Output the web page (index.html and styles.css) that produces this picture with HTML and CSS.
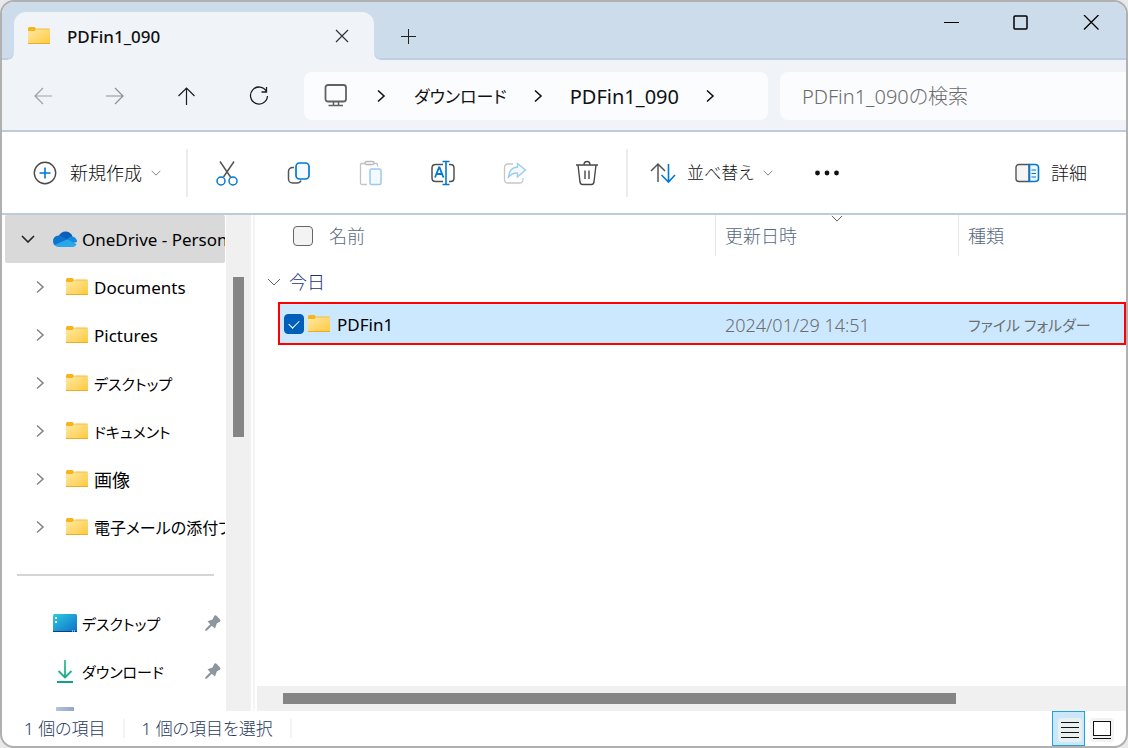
FILE: index.html
```html
<!DOCTYPE html>
<html lang="ja">
<head>
<meta charset="utf-8">
<meta name="viewport" content="width=device-width, initial-scale=1">
<title>PDFin1_090</title>
<link rel="stylesheet" href="styles.css">
</head>
<body>
<svg class="sprite" aria-hidden="true">
  <defs>
    <linearGradient id="folder-fill" x1="0" y1="0" x2="1" y2="1">
      <stop offset="0" stop-color="#ffe9a6"/><stop offset="1" stop-color="#ffc93c"/>
    </linearGradient>
    <linearGradient id="desk-fill" x1="0" y1="0" x2="1" y2="1">
      <stop offset="0" stop-color="#2ccbe0"/><stop offset="1" stop-color="#0f6fc8"/>
    </linearGradient>
    <linearGradient id="down-fill" gradientUnits="userSpaceOnUse" x1="0" y1="0" x2="0" y2="24">
      <stop offset="0" stop-color="#3cc68a"/><stop offset="1" stop-color="#0fa08c"/>
    </linearGradient>
    <linearGradient id="doc-fill" x1="0" y1="0" x2="1" y2="0">
      <stop offset="0" stop-color="#b4c4da"/><stop offset="1" stop-color="#8fa6c6"/>
    </linearGradient>
  </defs>
  <symbol id="folder" viewBox="0 0 24 20">
    <path d="M1 2.500Q1 1 2.500 1H7.500L9 2.500V6H1z" fill="#f7b51c"/>
    <path d="M1 5H7.500L9.500 3H22Q23 3 23 4V18H1z" fill="url(#folder-fill)"/>
    <path d="M9.500 3H22.500" stroke="#f2bd3a"/>
    <path d="M1 17.500H23" stroke="#efab21"/>
  </symbol>
  <symbol id="chev-right" viewBox="0 0 10 14"><path d="M2 1.500L8 7L2 12.500" fill="none" stroke="currentColor" stroke-width="1.600"/></symbol>
  <symbol id="chev-down" viewBox="0 0 14 8"><path d="M1 1L7 7L13 1" fill="none" stroke="currentColor"/></symbol>
  <symbol id="pin" viewBox="0 0 18 18"><path d="M10.500 1.500Q11.500 .8 12.500 1.700L16 5.500Q17 6.700 16 7.500L12.800 9.500L11 14.500L7.800 11.800L3 16.500L1 17L1.500 15L6.200 10.200L3.500 7.300L8.500 5.500z" fill="#8b979d"/></symbol>
</svg>

<div class="window">
  <header class="titlebar">
    <div class="tab">
      <svg class="folder" aria-hidden="true"><use href="#folder"/></svg>
      <span class="tab-title">PDFin1_090</span>
      <button class="tab-close" aria-label="タブを閉じる"><svg width="14" height="14" viewBox="0 0 14 14"><path d="M1 1L13 13M13 1L1 13" fill="none" stroke="#333" stroke-width="1.200"/></svg></button>
    </div>
    <button class="tab-new" aria-label="新しいタブ"><svg width="16" height="16" viewBox="0 0 16 16"><path d="M8.500 1V16M1 8.500H16" stroke="#222"/></svg></button>
    <div class="window-controls">
      <button aria-label="最小化"><svg width="16" height="16" viewBox="0 0 16 16"><path d="M1 7.500H16" stroke="#000"/></svg></button>
      <button aria-label="最大化"><svg width="16" height="16" viewBox="0 0 16 16"><rect x="1" y="1" width="13" height="13" rx="1" fill="none" stroke="#000" stroke-width="1.500"/></svg></button>
      <button aria-label="閉じる"><svg width="16" height="16" viewBox="0 0 16 16"><path d="M1 0L15.500 14.500M15.500 0L1 14.500" stroke="#000" stroke-width="1.300"/></svg></button>
    </div>
  </header>

  <nav class="navbar">
    <div class="nav-buttons">
      <button disabled aria-label="戻る"><svg width="20" height="20" viewBox="0 0 20 20"><path d="M19 10H2M10 2L2 10L10 18" fill="none" stroke="#9da0a3" stroke-width="1.200"/></svg></button>
      <button disabled aria-label="進む"><svg width="20" height="20" viewBox="0 0 20 20"><path d="M1 10H18M10 2L18 10L10 18" fill="none" stroke="#8e9194" stroke-width="1.200"/></svg></button>
      <button aria-label="上へ"><svg width="20" height="20" viewBox="0 0 20 20"><path d="M9.500 19V2M1.500 10L9.500 2L17.500 10" fill="none" stroke="#1c1c1c" stroke-width="1.200"/></svg></button>
      <button aria-label="最新の情報に更新"><svg width="20" height="20" viewBox="0 0 20 20"><path d="M17.500 5.500A8.500 8.500 0 1 0 18.500 10M17.500 1V6H12.500" fill="none" stroke="#1c1c1c" stroke-width="1.300"/></svg></button>
    </div>
    <div class="address">
      <svg class="pc" width="24" height="24" viewBox="0 0 24 24" aria-hidden="true"><rect x="1.500" y="1" width="20.500" height="16.500" rx="2.500" fill="none" stroke="#616161" stroke-width="1.800"/><path d="M9.500 18V21M14.500 18V21M4.500 21.500H19" stroke="#616161" stroke-width="1.500"/></svg>
      <svg class="crumb-sep first" aria-hidden="true"><use href="#chev-right"/></svg>
      <a href="#" class="crumb narrow">ダウンロード</a>
      <svg class="crumb-sep" aria-hidden="true"><use href="#chev-right"/></svg>
      <a href="#" class="crumb">PDFin1_090</a>
      <svg class="crumb-sep last" aria-hidden="true"><use href="#chev-right"/></svg>
    </div>
    <input class="search" type="search" placeholder="PDFin1_090の検索" aria-label="PDFin1_090の検索">
  </nav>

  <div class="toolbar" role="toolbar">
    <button class="tool labelled new">
      <svg width="24" height="24" viewBox="0 0 24 24" aria-hidden="true"><circle cx="12" cy="12" r="10.700" fill="none" stroke="#4a4a4a" stroke-width="1.400"/><path d="M12 6.500V17.500M6.500 12H17.500" stroke="#0078d4" stroke-width="1.600"/></svg>
      <span>新規作成</span>
      <svg class="caret" aria-hidden="true"><use href="#chev-down"/></svg>
    </button>
    <span class="divider"></span>
    <div class="tool-group">
      <button class="tool" aria-label="切り取り"><svg width="26" height="26" viewBox="0 0 26 26"><path d="M6 1.500L16.500 17M20 1.500L9.500 17" stroke="#555" stroke-width="1.500"/><g fill="#fff" stroke="#0078d4" stroke-width="1.500"><circle cx="7" cy="21" r="4"/><circle cx="19" cy="21" r="4"/></g></svg></button>
      <button class="tool" aria-label="コピー"><svg width="26" height="26" viewBox="0 0 26 26"><path d="M8 7.500H7A4 4 0 0 0 2.500 11.500V19A4 4 0 0 0 6.500 23H11Q14 23 15 20.500" fill="none" stroke="#555" stroke-width="1.500"/><rect x="10" y="3" width="13" height="16" rx="3.500" fill="#f4faff" stroke="#0078d4" stroke-width="1.700"/></svg></button>
      <button class="tool" disabled aria-label="貼り付け"><svg width="26" height="26" viewBox="0 0 26 26"><path d="M7 3.500H3.500Q2.500 3.500 2.500 4.500V23Q2.500 24.500 4 24.500H9M16 3.500H18.500Q19.500 3.500 19.500 4.500V6.500" fill="none" stroke="#c3c3c3" stroke-width="1.300"/><rect x="7" y="1.500" width="9" height="3" rx="1.500" fill="#fff" stroke="#b8b8b8" stroke-width="1.300"/><rect x="12" y="9" width="11" height="15.500" rx="1.500" fill="#f2f9ff" stroke="#9cc9ee" stroke-width="1.500"/></svg></button>
      <button class="tool" aria-label="名前の変更"><svg width="26" height="26" viewBox="0 0 26 26"><path d="M13 4.500H5.500Q2 4.500 2 8V18Q2 21.500 5.500 21.500H13M19 4.500H20.500Q24 4.500 24 8V18Q24 21.500 20.500 21.500H19" fill="none" stroke="#505050" stroke-width="1.500"/><path d="M5 17.500L9 7.500H9.500L13.500 17.500M6.500 14H12" fill="none" stroke="#0078d4" stroke-width="1.800"/><path d="M12.500 1.500H19.500M16 1.500V24.500M12.500 24.500H19.500" stroke="#0078d4" stroke-width="1.600"/></svg></button>
      <button class="tool" disabled aria-label="共有"><svg width="26" height="26" viewBox="0 0 26 26"><path d="M11 4H6Q2.500 4 2.500 7.500V19.500Q2.500 23 6 23H17.500Q21 23 21 19.500V18" fill="none" stroke="#c6c6c6" stroke-width="1.300"/><path d="M15.500 3.500L23.500 10L15.500 17V13Q10.500 12.500 6.500 17Q7.500 7.500 15.500 7z" fill="#f4faff" stroke="#9fcced" stroke-width="1.400"/></svg></button>
      <button class="tool" aria-label="削除"><svg width="26" height="26" viewBox="0 0 26 26"><path d="M2 5H24M10 5Q10 1.500 13 1.500T16 5M4 5L6 22Q6.500 24.500 8.500 24.500H17.500Q19.500 24.500 20 22L22 5M11 10.500V19M15 10.500V19" fill="none" stroke="#484848" stroke-width="1.400"/></svg></button>
    </div>
    <span class="divider"></span>
    <button class="tool labelled sort">
      <svg width="26" height="22" viewBox="0 0 26 22" aria-hidden="true"><path d="M8 20V2.500M1 9L8 2L15 9" fill="none" stroke="#555" stroke-width="1.500"/><path d="M18.500 2V19.500M11.500 13L18.500 20L25 13" fill="none" stroke="#0078d4" stroke-width="1.600"/></svg>
      <span>並べ替え</span>
      <svg class="caret" aria-hidden="true"><use href="#chev-down"/></svg>
    </button>
    <button class="tool more" aria-label="もっと見る"><svg width="26" height="6" viewBox="0 0 26 6"><g fill="#111"><circle cx="3.500" cy="3" r="2.400"/><circle cx="13" cy="3" r="2.400"/><circle cx="22.500" cy="3" r="2.400"/></g></svg></button>
    <button class="tool labelled details">
      <svg width="26" height="20" viewBox="0 0 26 20" aria-hidden="true"><path d="M15 1.500H5Q2 1.500 2 4.500V15.500Q2 18.500 5 18.500H15z" fill="#f5f5f5" stroke="#555" stroke-width="1.400"/><path d="M15.500 1.500H21Q24.500 1.500 24.500 4.500V15.500Q24.500 18.500 21 18.500H15.500z" fill="#eef7ff" stroke="#0078d4" stroke-width="1.600"/><path d="M17.500 7H22M17.500 10.500H22M17.500 14H22" stroke="#0078d4" stroke-width="1.200"/></svg>
      <span>詳細</span>
    </button>
  </div>

  <div class="content">
    <aside class="sidebar">
      <div class="tree">
        <a href="#" class="node root">
          <svg class="expander" viewBox="0 0 14 8" aria-hidden="true"><path d="M1 1L7 7L13 1" fill="none" stroke="#222" stroke-width="1.600"/></svg>
          <svg class="place" width="24" height="18" viewBox="0 0 24 18" aria-hidden="true"><path d="M5.500 6.500Q8 1.500 12.500 1.500Q17.500 1.500 19.500 6.500L13 11z" fill="#0a5fb8"/><path d="M0 11.500Q0 6 5.500 5.500Q8 5.500 10 7L17 11L2 15.500Q0 14 0 11.500z" fill="#1073ce"/><path d="M14 9.500Q16 6.500 19.500 6.500Q24 7.500 24 12L20 13z" fill="#1389df"/><path d="M1.500 15L14 9.500L23.500 14Q22.500 17 19.500 17H5.500Q3 17 1.500 15z" fill="#28a8ea"/></svg>
          <span>OneDrive - Personal</span>
        </a>
        <a href="#" class="node"><svg class="expander" aria-hidden="true"><use href="#chev-right"/></svg><svg class="folder" aria-hidden="true"><use href="#folder"/></svg><span>Documents</span></a>
        <a href="#" class="node"><svg class="expander" aria-hidden="true"><use href="#chev-right"/></svg><svg class="folder" aria-hidden="true"><use href="#folder"/></svg><span>Pictures</span></a>
        <a href="#" class="node narrow-kana"><svg class="expander" aria-hidden="true"><use href="#chev-right"/></svg><svg class="folder" aria-hidden="true"><use href="#folder"/></svg><span>デスクトップ</span></a>
        <a href="#" class="node narrow-kana"><svg class="expander" aria-hidden="true"><use href="#chev-right"/></svg><svg class="folder" aria-hidden="true"><use href="#folder"/></svg><span>ドキュメント</span></a>
        <a href="#" class="node kanji"><svg class="expander" aria-hidden="true"><use href="#chev-right"/></svg><svg class="folder" aria-hidden="true"><use href="#folder"/></svg><span>画像</span></a>
        <a href="#" class="node mixed"><svg class="expander" aria-hidden="true"><use href="#chev-right"/></svg><svg class="folder" aria-hidden="true"><use href="#folder"/></svg><span>電子メールの添付ファイル</span></a>
        <hr class="tree-rule">
        <a href="#" class="node pinned narrow-kana">
          <svg class="place" width="24" height="18" viewBox="0 0 24 18" aria-hidden="true"><rect width="24" height="18" rx="1.500" fill="url(#desk-fill)"/><path d="M0 17H24V18H0z" fill="#0a3f7e"/><path d="M2 3H4V5H2zM2 7H4V9H2z" fill="#fff"/><path d="M19 17H20M21 17H22" stroke="#fff"/></svg>
          <span>デスクトップ</span><svg class="pin" aria-label="ピン留め"><use href="#pin"/></svg>
        </a>
        <a href="#" class="node pinned narrow-kana">
          <svg class="place" width="24" height="24" viewBox="0 0 24 24" aria-hidden="true"><path d="M12 1V18M5.500 12L12 18.500L18.500 12M4 23H20" fill="none" stroke="url(#down-fill)" stroke-width="1.800"/></svg>
          <span>ダウンロード</span><svg class="pin" aria-label="ピン留め"><use href="#pin"/></svg>
        </a>
        <a href="#" class="node pinned" aria-label="ドキュメント">
          <svg class="place" width="24" height="24" viewBox="0 0 24 24" aria-hidden="true"><rect x="3" y="0" width="18" height="24" rx="1" fill="url(#doc-fill)"/></svg>
        </a>
      </div>
      <div class="vscroll"><div class="vthumb"></div></div>
    </aside>

    <main class="files">
      <table class="list">
        <thead>
          <tr>
            <th scope="col" class="name-head"><input type="checkbox" class="check" id="all" aria-label="すべて選択"><label for="all">名前</label></th>
            <th scope="col" class="sorted"><svg class="sort-mark" width="12" height="7" aria-hidden="true"><use href="#chev-down"/></svg>更新日時</th>
            <th scope="col">種類</th>
          </tr>
        </thead>
        <tbody>
          <tr class="group"><th colspan="3" scope="rowgroup"><svg width="14" height="8" aria-hidden="true"><use href="#chev-down"/></svg>今日</th></tr>
          <tr class="selected">
            <td class="name-cell"><input type="checkbox" class="check" id="row1" checked><svg class="folder" aria-hidden="true"><use href="#folder"/></svg><label for="row1">PDFin1</label></td>
            <td class="date">2024/01/29 14:51</td>
            <td class="narrow-kana">ファイル フォルダー</td>
          </tr>
        </tbody>
      </table>
      <div class="hscroll"><div class="hthumb"></div></div>
    </main>
  </div>

  <footer class="status">
    <span class="count">1 個の項目</span>
    <span class="count">1 個の項目を選択</span>
    <div class="views">
      <button class="view active" aria-label="詳細表示"><svg width="24" height="24" viewBox="0 0 24 24"><rect width="24" height="24" rx="4" fill="#e8f0f2"/><path d="M3 4.500H21M3 9.500H21M3 14.500H21M3 19.500H21" stroke="#111"/></svg></button>
      <button class="view" aria-label="大アイコン"><svg width="24" height="24" viewBox="0 0 24 24"><rect width="24" height="24" rx="4" fill="#f3f3f3"/><rect x="3.500" y="3.500" width="17" height="14" fill="#fff" stroke="#111"/><path d="M3 20.500H21" stroke="#111"/></svg></button>
    </div>
  </footer>
</div>
</body>
</html>
```
FILE: styles.css
```css
* { box-sizing: border-box; }

body {
  margin: 0;
  background: #e9e9e9;
  color: #111;
  font-family: "Noto Sans", "Noto Sans CJK JP", sans-serif;
  font-size: 17px;
  line-height: 24px;
  font-feature-settings: "palt";
}

button {
  display: flex;
  align-items: center;
  justify-content: center;
  padding: 0;
  border: 0;
  background: none;
  color: inherit;
  font: inherit;
}

a { color: inherit; text-decoration: none; }
svg { flex: none; display: block; }

.sprite { position: absolute; width: 0; height: 0; }
.folder { width: 24px; height: 20px; }

.window {
  display: flex;
  flex-direction: column;
  height: 100vh;
  overflow: hidden;
  border: 2px solid #b0b0b0;
  border-radius: 14px;
  background: #fff;
}

/* Title bar */
.titlebar {
  display: flex;
  flex: none;
  height: 58px;
  padding-left: 12px;
  background: linear-gradient(#cddcea 56px, #bfcfe0 56px);
}

.tab {
  position: relative;
  display: flex;
  align-items: center;
  width: 360px;
  height: 48px;
  margin-top: 10px;
  padding: 0 13px;
  border-radius: 12px 12px 0 0;
  background: #f0f4f9;
}

.tab::before,
.tab::after {
  content: "";
  position: absolute;
  bottom: 0;
  width: 6px;
  height: 6px;
}

.tab::before { right: 100%; background: radial-gradient(circle at 0 0, #cddcea 4px, #bfcfe0 5px, #f0f4f9 6px); }
.tab::after { left: 100%; background: radial-gradient(circle at 100% 0, #cddcea 4px, #bfcfe0 5px, #f0f4f9 6px); }

.tab-title { flex: 1; margin-left: 16px; padding-top: 1px; font-weight: 500; }
.tab-close { width: 38px; height: 36px; }
.tab-new { width: 68px; height: 48px; margin-top: 10px; }
.window-controls { display: flex; margin-left: auto; height: 42px; }
.window-controls button { width: 70px; }

/* Navigation bar */
.navbar {
  display: grid;
  grid-template-columns: 302px 464fr 12px 346fr;
  flex: none;
  align-items: center;
  height: 72px;
  padding-top: 2px;
  background: #f0f4f9;
  border-bottom: 2px solid #bdcbdb;
}

.nav-buttons { display: flex; padding-left: 5px; }
.nav-buttons button { width: 72px; height: 48px; }

.address {
  display: flex;
  align-items: center;
  min-width: 0;
  height: 48px;
  padding-left: 20px;
  border-radius: 8px;
  background: #fbfcfe;
  font-size: 20px;
}

.crumb { padding-top: 1px; white-space: nowrap; }
.crumb.narrow { font-size: 17px; }
.crumb-sep { width: 10px; height: 14px; margin: 0 27px 0 26px; }
.crumb-sep.first { margin: 0 28px; }

.search {
  grid-column: 4;
  width: 100%;
  min-width: 0;
  height: 48px;
  padding: 1px 22px 0;
  border: 0;
  border-radius: 8px 0 0 8px;
  background: #fbfcfe;
  font: inherit;
  font-size: 20px;
  font-feature-settings: inherit;
}

.search::placeholder { color: #6b6b6b; opacity: 1; font-weight: 300; }

/* Command bar */
.toolbar {
  display: flex;
  flex: none;
  align-items: center;
  height: 83px;
  padding-left: 31px;
  border-bottom: 2px solid #bdcbdb;
}

.tool { height: 48px; }
.tool-group { display: flex; padding: 0 3px; }
.tool-group .tool { width: 72px; }
.labelled { font-size: 18px; font-weight: 300; }
.labelled span { margin: 0 9px 0 13px; white-space: nowrap; }
.caret { width: 10px; height: 6px; color: #555; }
.new { margin-right: 25px; }
.divider { width: 2px; height: 48px; background: #ececec; }
.sort { padding-left: 22px; font-size: 17px; }
.sort span { margin-left: 11px; }
.more { width: 26px; margin-left: 41px; }
.details { margin: 0 39px 0 auto; }
.details span { margin-right: 0; margin-left: 11px; }

/* Content */
.content { display: flex; flex: 1; min-height: 0; }

.sidebar {
  display: flex;
  flex: none;
  width: 253px;
  border-right: 2px solid #f5f5f5;
  padding-right: 2px;
}

.tree { width: 224px; padding: 0 1px 0 3px; overflow: hidden; }

.node {
  display: flex;
  align-items: center;
  height: 48px;
  padding-left: 30px;
  overflow: hidden;
  white-space: nowrap;
  color: #000;
}

.node span { padding-top: 1px; }
.node .expander { width: 10px; height: 14px; color: #858585; }
.node .folder { margin: 0 5px 0 20px; }
.root { padding-left: 16px; border-radius: 2px; background: #d9d9d9; }
.root .expander { width: 14px; height: 8px; }
.root .place { margin-left: 18px; }
.place { margin-right: 5px; }
.narrow-kana { font-size: 15px; }
.mixed { font-size: 16px; }
.kanji { font-size: 18px; }
.pinned { padding-left: 48px; }
.pin { width: 18px; height: 18px; margin: 0 3px 0 auto; }

.tree-rule {
  height: 2px;
  margin: 23px 11px 23px 12px;
  border: 0;
  background: #d5d5d5;
}

.vscroll { width: 25px; padding: 62px 7px 0; background: #f0f0f0; }
.vthumb { height: 160px; background: #858585; }

.files { display: flex; flex: 1; flex-direction: column; min-width: 0; padding-left: 2px; }

.list { display: block; flex: 1; min-height: 0; }
.list thead,
.list tbody { display: block; }

.list tr {
  display: grid;
  grid-template-columns: 437fr 243fr 168fr;
  margin-left: 21px;
}

.list th,
.list td {
  display: flex;
  align-items: center;
  padding: 0 0 0 10px;
  text-align: left;
  white-space: nowrap;
}

.list thead th {
  position: relative;
  height: 41px;
  padding-left: 9px;
  border-left: 1px solid #e5e5e5;
  color: #56697f;
  font-size: 18px;
  font-weight: 300;
}

.list thead .name-head { padding-left: 15px; border-left: 0; }
.name-head label { margin-left: 16px; }
.sort-mark { position: absolute; top: 0; left: 50%; margin-left: -6px; color: #444; }

.list .group { grid-template-columns: 1fr; margin: 4px 0 0 10px; }
.list .group th { gap: 8px; height: 42px; padding: 2px 0 0; color: #1c3382; font-size: 18px; font-weight: 300; }
.group svg { color: #666; }

.list .selected {
  height: 43px;
  background: #cce8ff;
  outline: 2px solid #f00;
  outline-offset: -2px;
}

.list .selected td { padding-top: 2px; color: #6d6d6d; }
.list .selected .name-cell { padding: 0 0 0 6px; color: #000; }
.name-cell .folder { margin: 0 6px 0 3px; }
.name-cell label { padding-top: 2px; }
.date { font-size: 18px; font-weight: 300; }

.check {
  appearance: none;
  width: 20px;
  height: 20px;
  margin: 0;
  border: 1px solid #666;
  border-radius: 4px;
  background: #f3f3f3;
}

.check:checked {
  display: grid;
  place-items: center;
  border-color: #005fb8;
  background: #005fb8;
}

.check:checked::before {
  content: "";
  width: 9px;
  height: 5px;
  border: solid #fff;
  border-width: 0 0 1px 1px;
  transform: translateY(-1px) rotate(-45deg);
}

.hscroll { flex: none; padding: 7px 170px 7px 26px; background: #f0f0f0; }
.hthumb { height: 11px; background: #858585; }

/* Status bar */
.status {
  display: flex;
  flex: none;
  align-items: center;
  height: 35px;
  padding-left: 5px;
  color: #1e395b;
}

.count { padding: 1px 17px 0; border-right: 2px solid #f3f3f3; line-height: 18px; font-weight: 300; white-space: nowrap; }
.views { display: flex; margin-left: auto; padding-right: 8px; }
.view { width: 33px; height: 35px; padding-top: 2px; }
.view.active { padding-left: 2px; border: 1px solid #26a0da; background: #cce8f8; }
```
